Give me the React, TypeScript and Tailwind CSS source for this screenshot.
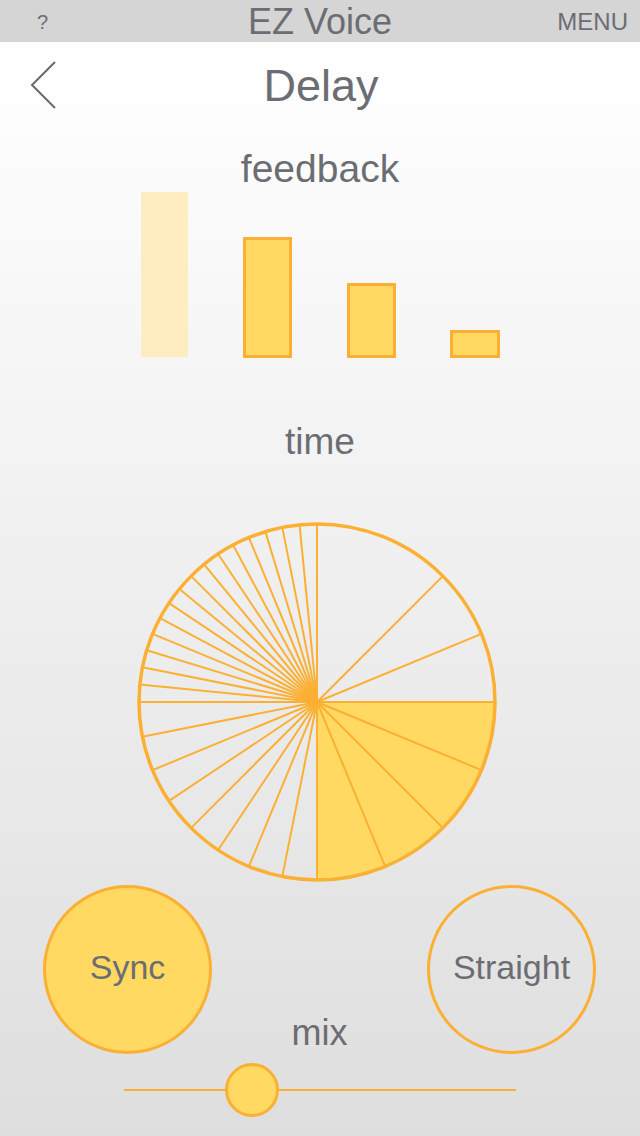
import React from "react";

const STROKE = "#FBB034";
const FILL = "#FFD961";

function Pie() {
  const c = 182;
  const r = 178;
  const angles: number[] = [];
  [90, 45, 22.5, 0].forEach((a) => angles.push(a));
  [-22.5, -45, -67.5, -90].forEach((a) => angles.push(a));
  for (let i = 1; i <= 8; i++) angles.push(-90 - i * 11.25);
  for (let i = 1; i < 16; i++) angles.push(180 - i * 5.625);
  const lines = angles.map((a) => {
    const rad = (a * Math.PI) / 180;
    return { x: c + r * Math.cos(rad), y: c - r * Math.sin(rad) };
  });
  return (
    <svg width="364" height="364" viewBox="0 0 364 364">
      <path d={`M ${c} ${c} L ${c + r} ${c} A ${r} ${r} 0 0 1 ${c} ${c + r} Z`} fill={FILL} />
      {lines.map((p, i) => (
        <line key={i} x1={c} y1={c} x2={p.x} y2={p.y} stroke={STROKE} strokeWidth="2" />
      ))}
      <circle cx={c} cy={c} r={r} fill="none" stroke={STROKE} strokeWidth="3.5" />
    </svg>
  );
}

export default function App() {
  const font = { fontFamily: '"Liberation Sans", Arial, sans-serif' };
  return (
    <div
      className="w-[640px] h-[1136px] flex flex-col bg-[linear-gradient(to_bottom,#ffffff_4%,#dedede)] overflow-hidden"
      style={font}
    >
      {/* top bar */}
      <div className="h-[42px] bg-[#D5D5D5] grid grid-cols-[1fr_auto_1fr] items-center shrink-0">
        <div className="justify-self-start pl-[37px] pt-[1px] text-[20px] leading-[42px] text-[#6C6D73]">?</div>
        <div className="text-[36px] leading-[42px] text-[#6C6D73]">EZ Voice</div>
        <div className="justify-self-end pr-[12px] text-[24px] leading-[42px] text-[#6C6D73]">MENU</div>
      </div>

      {/* header */}
      <div className="mt-[13px] h-[60px] grid grid-cols-[1fr_auto_1fr] items-center shrink-0">
        <div className="justify-self-start pl-[30px] flex items-center">
          <svg width="28" height="50" viewBox="0 0 28 50">
            <polyline points="25,2 2,25 25,48" fill="none" stroke="#6a6a6a" strokeWidth="2" />
          </svg>
        </div>
        <div className="text-[45px] leading-none text-[#6C6D73] pl-[2px]">Delay</div>
        <div />
      </div>

      {/* feedback */}
      <div className="mt-[34px] h-[40px] text-center text-[39px] leading-[40px] text-[#6C6D73] shrink-0">feedback</div>

      <div className="h-[169px] flex items-end justify-center shrink-0">
        <div className="w-[47px] h-[165px] bg-[#FFEDC2] mb-[1px]" />
        <div className="ml-[55px] w-[49px] h-[121px] bg-[#FFD961] border-[3px] border-[#FBB034]" />
        <div className="ml-[55px] w-[49px] h-[75px] bg-[#FFD961] border-[3px] border-[#FBB034]" />
        <div className="ml-[54px] w-[50px] h-[28px] bg-[#FFD961] border-[3px] border-[#FBB034]" />
      </div>

      {/* time */}
      <div className="mt-[64px] h-[40px] text-center text-[37px] leading-[40px] text-[#6C6D73] shrink-0">time</div>

      <div className="mt-[58px] flex justify-center pr-[6px] shrink-0">
        <Pie />
      </div>

      {/* buttons */}
      <div className="mt-[1px] h-[169px] flex items-stretch justify-between pl-[43px] pr-[44px] shrink-0">
        <div className="w-[169px] h-[169px] rounded-full bg-[#FFD961] border-[3px] border-[#FBB034] flex items-center justify-center">
          <span className="text-[34px] text-[#6C6D73] mb-[4px]">Sync</span>
        </div>
        <div className="flex-1 flex items-end justify-center pb-[1px]">
          <span className="text-[36px] leading-[40px] text-[#6C6D73]">mix</span>
        </div>
        <div className="w-[169px] h-[169px] rounded-full border-[3px] border-[#FBB034] flex items-center justify-center">
          <span className="text-[34px] text-[#6C6D73] mb-[4px]">Straight</span>
        </div>
      </div>

      {/* slider */}
      <div className="mt-[9px] mx-[124px] h-[54px] relative flex items-center shrink-0">
        <div className="w-full h-[2px] bg-[#FBB034]" />
        <div className="absolute left-[101px] top-0 w-[54px] h-[54px] rounded-full bg-[#FFD961] border-[3px] border-[#FBB034]" />
      </div>
    </div>
  );
}
